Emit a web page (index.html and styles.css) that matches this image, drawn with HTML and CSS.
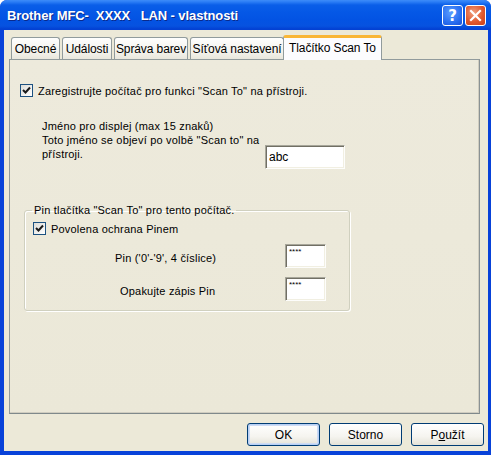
FILE: index.html
```html
<!DOCTYPE html>
<html lang="cs">
<head>
<meta charset="utf-8">
<title>Brother MFC- XXXX LAN - vlastnosti</title>
<link rel="stylesheet" href="styles.css">
</head>
<body>
<div class="window">
  <div class="titlebar">
    <span class="title">Brother MFC-&nbsp; XXXX &nbsp; LAN - vlastnosti</span>
    <div class="tbuttons">
      <div class="tbtn help">?</div>
      <div class="tbtn close">
        <svg width="13" height="13" viewBox="0 0 13 13"><path d="M2 2 L11 11 M11 2 L2 11" stroke="#fff" stroke-width="2.2" stroke-linecap="square"/></svg>
      </div>
    </div>
  </div>
  <div class="client">
    <div class="tabs">
      <div class="tab">Obecné</div>
      <div class="tab">Události</div>
      <div class="tab">Správa barev</div>
      <div class="tab">Síťová nastavení</div>
      <div class="tab active">Tlačítko Scan To</div>
    </div>
    <div class="panel">
      <label class="check row1">
        <span class="cbox"><svg width="9" height="9" viewBox="0 0 9 9"><path d="M1 4 L3.5 6.5 L8 1.5" fill="none" stroke="#1a1a1a" stroke-width="2"/></svg></span>
        <span>Zaregistrujte počítač pro funkci "Scan To" na přístroji.</span>
      </label>
      <div class="namerow">
        <div class="namelabel">Jméno pro displej (max 15 znaků)<br>Toto jméno se objeví po volbě "Scan to" na<br>přístroji.</div>
        <div class="field namefield">abc</div>
      </div>
      <fieldset class="group">
        <legend>Pin tlačítka "Scan To" pro tento počítač.</legend>
        <label class="check row2">
          <span class="cbox"><svg width="9" height="9" viewBox="0 0 9 9"><path d="M1 4 L3.5 6.5 L8 1.5" fill="none" stroke="#1a1a1a" stroke-width="2"/></svg></span>
          <span>Povolena ochrana Pinem</span>
        </label>
        <div class="pinrow first">
          <span class="pinlabel">Pin ('0'-'9', 4 číslice)</span>
          <div class="field pinfield">****</div>
        </div>
        <div class="pinrow second">
          <span class="pinlabel l2">Opakujte zápis Pin</span>
          <div class="field pinfield">****</div>
        </div>
      </fieldset>
    </div>
    <div class="buttons">
      <button class="btn default">OK</button>
      <button class="btn">Storno</button>
      <button class="btn"><span>P<u>o</u>užít</span></button>
    </div>
  </div>
</div>
</body>
</html>
```

FILE: styles.css
```css
* { box-sizing: border-box; }
html, body { margin: 0; padding: 0; }
body {
  width: 491px;
  height: 455px;
  overflow: hidden;
  font-family: "Liberation Sans", Arial, sans-serif;
  font-size: 11px;
  letter-spacing: 0.2px;
  color: #000;
}
.window {
  width: 491px;
  height: 455px;
  display: flex;
  flex-direction: column;
  background: #0842d9;
  border-radius: 7px 7px 0 0;
  overflow: hidden;
}
.titlebar {
  height: 30px;
  flex: none;
  display: flex;
  align-items: center;
  justify-content: space-between;
  padding: 0 5px 0 7px;
  background: linear-gradient(#3d8cf8 0, #2a7cf5 2px, #0a5ee8 5px, #0558e6 12px, #0353e3 20px, #0652e0 26px, #0341d3 29px, #0341d3 30px);
}
.title {
  color: #fff;
  font-family: "Liberation Sans", Arial, sans-serif;
  font-weight: bold;
  font-size: 13px;
  letter-spacing: -0.1px;
  text-shadow: 1px 1px 0 #0a2a8c;
  white-space: pre;
  padding-top: 1px;
}
.tbuttons { display: flex; gap: 2px; padding-top: 1px; }
.tbtn {
  width: 21px;
  height: 21px;
  border: 1px solid #fff;
  border-radius: 3px;
  display: flex;
  align-items: center;
  justify-content: center;
}
.help {
  background: radial-gradient(circle at 40% 35%, #5a9cff 0, #2a6ff0 60%, #1a50d8 100%);
  color: #fff;
  font-family: "DejaVu Sans", sans-serif;
  font-weight: bold;
  font-size: 15px;
  letter-spacing: 0;
}
.close {
  background: radial-gradient(circle at 40% 35%, #f0a080 0, #e0592e 55%, #c8401a 100%);
}
.client {
  flex: 1;
  margin: 0 3px 4px 4px;
  background: #ece9d8;
  display: flex;
  flex-direction: column;
  padding: 5px 0 0 5px;
}
.tabs {
  display: flex;
  align-items: flex-end;
  height: 24px;
  padding-left: 2px;
  position: relative;
  z-index: 1;
}
.tab {
  height: 22px;
  padding: 0 4px;
  margin-right: 2px;
  border: 1px solid #919b9c;
  border-bottom: none;
  border-radius: 3px 3px 0 0;
  background: linear-gradient(#fefefe, #f2f1ea 70%, #e9e7dc);
  display: flex;
  align-items: center;
  justify-content: center;
  white-space: nowrap;
  font-size: 12px;
  letter-spacing: -0.1px;
}
.tab:nth-child(1) { width: 49px; }
.tab:nth-child(2) { width: 50px; }
.tab:nth-child(3) { width: 74px; }
.tab:nth-child(4) { width: 94px; margin-right: 0; }
.tab.active {
  height: 25px;
  width: 99px;
  margin-left: -1px;
  margin-bottom: -1px;
  background: #fcfcfe;
  border-top: 3px solid #f9b636;
  padding-bottom: 2px;
  position: relative;
}
.panel {
  width: 471px;
  height: 355px;
  border: 1px solid #919b9c;
  border-right-color: #8a9294;
  border-bottom-color: #7f898b;
  background: linear-gradient(#edeadc, #ebe8d8);
  box-shadow: inset -1px -1px 0 #d0cdc0;
  padding: 0;
  position: relative;
}
.check {
  display: flex;
  align-items: center;
  gap: 5px;
  white-space: nowrap;
}
.cbox {
  width: 13px;
  height: 13px;
  border: 1px solid #1c5180;
  background: linear-gradient(135deg, #dcdcd7, #fff);
  display: flex;
  align-items: center;
  justify-content: center;
  flex: none;
}
.row1 { margin: 24px 0 0 10px; }
.namerow {
  display: flex;
  justify-content: space-between;
  margin: 21px 0 0 32px;
  width: 303px;
}
.namelabel { line-height: 14px; padding-top: 1px; }
.field {
  background: #fff;
  border: 1px solid;
  border-color: #a7a69a #fdfdfb #fdfdfb #a7a69a;
  box-shadow: inset 1px 1px 0 #716f64, inset -1px -1px 0 #f1efe2;
}
.namefield {
  width: 80px;
  height: 24px;
  margin-top: 27px;
  font-size: 12px;
  letter-spacing: 0;
  padding: 4px 0 0 3px;
}
.group {
  margin: 35px 0 0 14px;
  width: 326px;
  height: 107px;
  border: 1px solid #d0d0bf;
  border-radius: 3px;
  padding: 0 0 0 9px;
  box-shadow: inset 1px 1px 0 #fff, 1px 1px 0 #fff;
}
.group legend {
  padding: 0 2px;
  margin-left: -2px;
  font-size: 11px;
  line-height: 12px;
}
.row2 { margin: 6px 0 0 -1px; }
.pinrow {
  display: flex;
  align-items: center;
  justify-content: space-between;
  width: 292px;
}
.pinrow.first { margin-top: 9px; }
.pinrow.second { margin-top: 9px; }
.pinlabel { padding-left: 81px; padding-top: 4px; }
.pinlabel.l2 { padding-left: 86px; }
.pinfield {
  width: 41px;
  height: 24px;
  font-size: 8px;
  line-height: 8px;
  padding: 3px 0 0 3px;
  letter-spacing: 0;
}
.buttons {
  display: flex;
  justify-content: flex-end;
  gap: 9px;
  padding: 9px 4px 0 0;
}
.btn {
  width: 73px;
  height: 23px;
  border: 1px solid #003c74;
  border-radius: 3px;
  background: linear-gradient(#ffffff, #f5f4ef 60%, #e4e2d8);
  font-family: "Liberation Sans", Arial, sans-serif;
  font-size: 12px;
  color: #000;
  padding: 0;
  margin: 0;
}
.btn.default {
  box-shadow: inset 0 0 0 1px #b8d0f4, inset 0 0 0 2px #cddbf4;
}
.btn u { text-decoration: underline; }
```
